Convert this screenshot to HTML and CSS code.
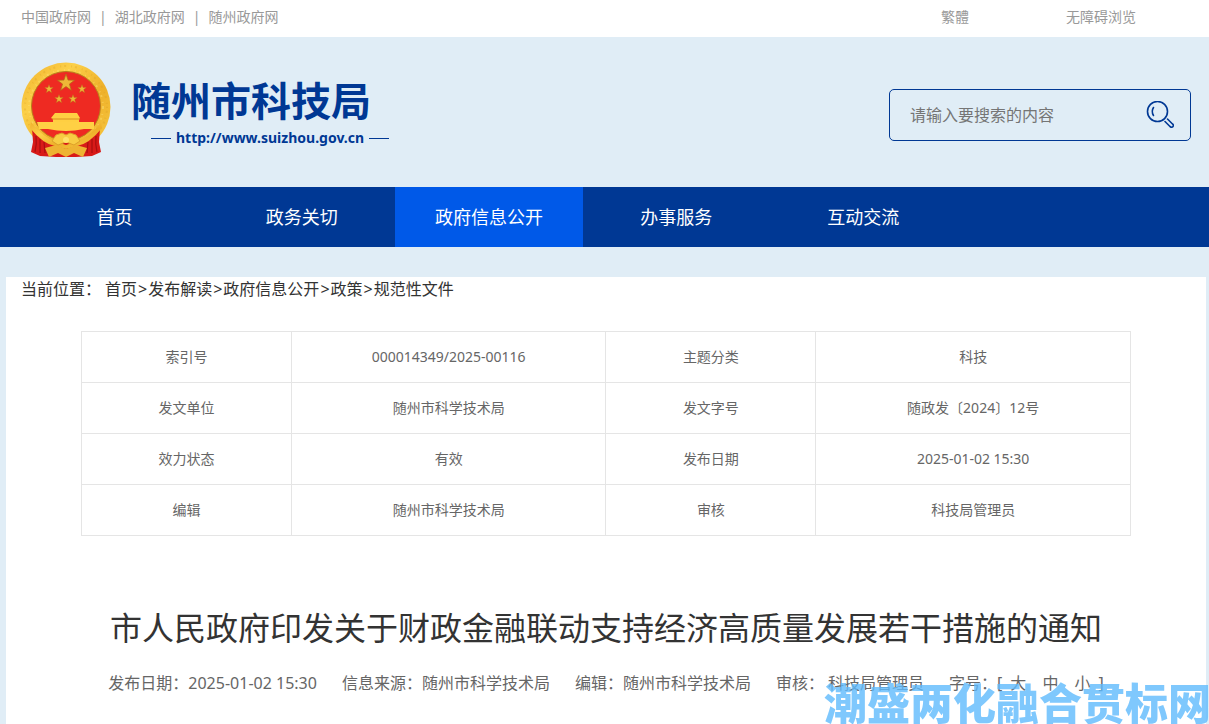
FILE: index.html
```html
<!DOCTYPE html>
<html lang="zh-CN">

<head>
    <meta charset="UTF-8">
    <title>随州市科技局</title>
    <link rel="stylesheet" href="styles.css">
</head>

<body>
    <div class="topbar">
        <div class="wrap topbar-inner">
            <div class="top-links">
                <a href="#">中国政府网</a><span>|</span><a href="#">湖北政府网</a><span>|</span><a href="#">随州政府网</a>
            </div>
            <div class="top-tools">
                <a href="#">繁體</a>
                <a href="#">无障碍浏览</a>
            </div>
        </div>
    </div>

    <header class="header">
        <div class="wrap header-inner">
            <a href="#" class="logo">
                <svg class="emblem" viewBox="0 0 90 96" aria-hidden="true">
                    <defs>
                        <linearGradient id="gold" x1="0" y1="0" x2="1" y2="1">
                            <stop offset="0" stop-color="#f0b02c" />
                            <stop offset="0.3" stop-color="#fcd048" />
                            <stop offset="0.6" stop-color="#eeb02a" />
                            <stop offset="1" stop-color="#f8ca42" />
                        </linearGradient>
                        <path id="star" d="M0-10 2.3-3.2 9.5-3.1 3.8 1.2 5.900 8.100 0 4-5.900 8.100-3.800 1.200-9.500-3.100-2.300-3.200z" />
                    </defs>
                    <ellipse cx="45" cy="45" rx="44.5" ry="44.5" fill="url(#gold)" />
                    <circle cx="45" cy="45" r="41" fill="none" stroke="#d89a22" stroke-width="2" stroke-dasharray="1 3 2 5" opacity="0.3" />
                    <circle cx="45" cy="45" r="37" fill="none" stroke="#ffe680" stroke-width="2" stroke-dasharray="2 5 1 3" opacity="0.4" />
                    <circle cx="45" cy="44" r="34.5" fill="#ee2a22" stroke="#b8801c" />
                    <path d="M11 66 24 76 35 80 45 76 55 80 66 76 79 66 78 80 80 90 71 94 55 95H35L19 94 10 90 12 80z" fill="#d81a18" />
                    <path d="M15 74Q16 82 14 90M19 77V91M23 80 24 91M75 74Q74 82 76 90M71 77V91M67 80 66 91" stroke="#a80f10" stroke-width="1.2" fill="none" />
                    <path d="M10 60Q22 76 36 80L45 83 54 80Q68 76 80 60L81 66Q68 82 56 84L45 87 34 84Q22 82 9 66z" fill="url(#gold)" />
                    <path d="M24 86 35 83 45 87 55 83 66 86 62 95 53 91 45 95 37 91 28 95z" fill="#eeb332" />
                    <path d="M35 73 41 71 45 73 49 71 55 73 59 79 53 83 45 80 37 83 31 79z" fill="#f8cc43" stroke="#dda02a" />
                    <circle cx="45" cy="78" r="3" fill="#ffe16a" />
                    <path d="M16 60H73V67H63Q54 69 45 69T27 67H18z" fill="#ffd044" />
                    <path d="M34 51H56L59 56 58 57V60H32V57L30 56z" fill="#ffcf42" />
                    <path d="M31 57H59" stroke="#d89020" />
                    <g fill="#eeb737" stroke="#b36b16" stroke-width="0.8">
                        <use href="#star" transform="translate(45 21) scale(0.9)" />
                        <use href="#star" transform="translate(28 27) scale(0.45)" />
                        <use href="#star" transform="translate(61 27) scale(0.45)" />
                        <use href="#star" transform="translate(38 37) scale(0.45)" />
                        <use href="#star" transform="translate(52 37) scale(0.45)" />
                    </g>
                </svg>
                <span class="logo-text">
                    <strong class="site-name">随州市科技局</strong>
                    <span class="site-url">http://www.suizhou.gov.cn</span>
                </span>
            </a>
            <form class="search">
                <input type="text" placeholder="请输入要搜索的内容" aria-label="请输入要搜索的内容">
                <button type="submit" aria-label="搜索">
                    <svg viewBox="0 0 28 28" fill="none" stroke="#003894" stroke-width="1.6" stroke-linecap="round" stroke-linejoin="round">
                        <circle cx="11.500" cy="10.500" r="10" />
                        <path d="M7.500 6.500Q5 10.500 7.500 14.500" />
                        <path d="M19 20.500 24 25.500Q26 27 27 25.500T26.500 23L21.500 18" />
                    </svg>
                </button>
            </form>
        </div>
    </header>

    <nav class="nav">
        <div class="wrap nav-inner">
            <a href="#">首页</a>
            <a href="#">政务关切</a>
            <a href="#" class="active">政府信息公开</a>
            <a href="#">办事服务</a>
            <a href="#">互动交流</a>
        </div>
    </nav>

    <main class="main">
        <div class="wrap content">
            <div class="breadcrumb">
                <span>当前位置：</span>
                <div><a href="#">首页</a><i>&gt;</i><a href="#">发布解读</a><i>&gt;</i><a href="#">政府信息公开</a><i>&gt;</i><a href="#">政策</a><i>&gt;</i><a href="#">规范性文件</a></div>
            </div>

            <table class="info">
                <tbody>
                    <tr>
                        <th>索引号</th>
                        <td>000014349/2025-00116</td>
                        <th>主题分类</th>
                        <td>科技</td>
                    </tr>
                    <tr>
                        <th>发文单位</th>
                        <td>随州市科学技术局</td>
                        <th>发文字号</th>
                        <td>随政发〔2024〕12号</td>
                    </tr>
                    <tr>
                        <th>效力状态</th>
                        <td>有效</td>
                        <th>发布日期</th>
                        <td>2025-01-02 15:30</td>
                    </tr>
                    <tr>
                        <th>编辑</th>
                        <td>随州市科学技术局</td>
                        <th>审核</th>
                        <td>科技局管理员</td>
                    </tr>
                </tbody>
            </table>

            <h1>市人民政府印发关于财政金融联动支持经济高质量发展若干措施的通知</h1>

            <div class="meta">
                <span>发布日期：2025-01-02 15:30</span>
                <span>信息来源：随州市科学技术局</span>
                <span>编辑：随州市科学技术局</span>
                <span>审核： 科技局管理员</span>
                <span class="font-size">字号：[<button type="button">大</button><button type="button">中</button><button type="button">小</button>]</span>
            </div>
        </div>
    </main>

    <div class="watermark">潮盛两化融合贯标网</div>
</body>

</html>
```
FILE: styles.css
```css
* {
    box-sizing: border-box;
}

body {
    margin: 0;
    min-height: 100vh;
    background-color: #e0edf6;
    color: #333;
    font-family: "Noto Sans", "Noto Sans CJK SC", sans-serif;
    font-size: 16px;
    line-height: 24px;
    overflow: hidden;
}

a {
    color: inherit;
    text-decoration: none;
}

button,
input {
    padding: 0;
    border: none;
    background: none;
    color: inherit;
    font: inherit;
}

button {
    cursor: pointer;
}

.topbar,
.header,
.nav,
.main {
    padding: 0 3px 0 6px;
}

.wrap {
    max-width: 1200px;
    margin: 0 auto;
    padding: 0 15px;
}

.topbar {
    background-color: #fff;
    color: #999;
    font-size: 14px;
}

.topbar-inner {
    display: flex;
    justify-content: space-between;
    line-height: 34px;
    padding-bottom: 3px;
}

.top-links span {
    margin: 0 8px;
}

.top-tools {
    display: flex;
    gap: 97px;
    padding-right: 55px;
}

.header-inner {
    display: flex;
    align-items: flex-start;
    justify-content: space-between;
    height: 150px;
    padding-top: 25px;
}

.logo {
    display: flex;
    gap: 20px;
    color: #003894;
}

.emblem {
    width: 90px;
    height: 96px;
}

.logo-text {
    display: flex;
    flex-direction: column;
    padding-top: 12px;
}

.site-name {
    font-size: 40px;
    line-height: 54px;
}

.site-url {
    display: flex;
    align-items: center;
    gap: 5px;
    margin-left: 20px;
    font-size: 14px;
    font-weight: bold;
    line-height: 20px;
}

.site-url::before,
.site-url::after {
    content: "";
    width: 20px;
    height: 1px;
    background-color: #003894;
}

.search {
    display: flex;
    align-items: center;
    width: 302px;
    height: 52px;
    margin-top: 27px;
    padding: 0 16px 0 20px;
    border: 1px solid #003894;
    border-radius: 5px;
}

.search input {
    flex: 1;
    min-width: 0;
    outline: none;
}

.search input::placeholder {
    color: #757575;
}

.search svg {
    display: block;
    width: 28px;
    height: 28px;
}

.nav {
    background-color: #003894;
    color: #fff;
    font-size: 18px;
}

.nav-inner {
    display: flex;
}

.nav-inner a {
    width: 16%;
    line-height: 60px;
    text-align: center;
}

.nav-inner a.active {
    background-color: #0059e8;
}

.main {
    padding-top: 30px;
}

.content {
    min-height: calc(100vh - 277px);
    background-color: #fff;
}

.breadcrumb {
    display: flex;
    gap: 4px;
}

.breadcrumb i {
    margin: 0 1px;
    font-style: normal;
}

.info {
    width: calc(100% - 120px);
    margin: 30px auto 0;
    border-collapse: collapse;
    table-layout: fixed;
    color: #666;
    font-size: 14px;
}

.info th,
.info td {
    width: 30%;
    height: 51px;
    padding: 0;
    border: 1px solid #e5e5e5;
    font-weight: normal;
    text-align: center;
}

.info th {
    width: 20%;
}

h1 {
    margin: 68px 0 0;
    font-size: 32px;
    font-weight: normal;
    line-height: 48px;
    text-align: center;
}

.meta {
    display: flex;
    justify-content: center;
    gap: 25px;
    margin-top: 19px;
    color: #666;
    white-space: nowrap;
}

.font-size button {
    margin: 0 8px;
}

.watermark {
    position: fixed;
    right: -2px;
    bottom: -12px;
    color: rgba(95, 186, 252, 0.8);
    font-size: 43px;
    font-weight: 900;
    line-height: 64px;
    white-space: nowrap;
    pointer-events: none;
}
```
